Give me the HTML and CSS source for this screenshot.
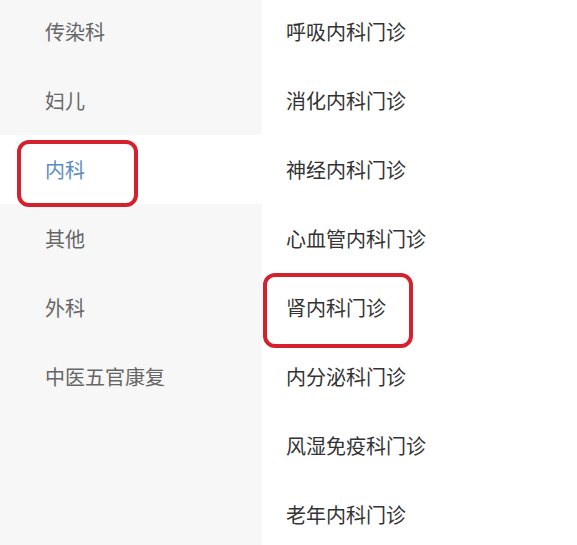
FILE: index.html
```html
<!DOCTYPE html>
<html lang="zh">
<head>
<meta charset="utf-8">
<link rel="stylesheet" href="styles.css">
</head>
<body>
<div class="page">
  <div class="side">
    <div class="side-item">传染科</div>
    <div class="side-item">妇儿</div>
    <div class="side-item active">内科</div>
    <div class="side-item">其他</div>
    <div class="side-item">外科</div>
    <div class="side-item">中医五官康复</div>
  </div>
  <div class="main">
    <div class="main-item">呼吸内科门诊</div>
    <div class="main-item">消化内科门诊</div>
    <div class="main-item">神经内科门诊</div>
    <div class="main-item">心血管内科门诊</div>
    <div class="main-item">肾内科门诊</div>
    <div class="main-item">内分泌科门诊</div>
    <div class="main-item">风湿免疫科门诊</div>
    <div class="main-item">老年内科门诊</div>
  </div>
  <div class="mark mark-side"></div>
  <div class="mark mark-main"></div>
</div>
</body>
</html>
```
FILE: styles.css
```css
html, body {
  margin: 0;
  padding: 0;
  background: #ffffff;
}
body {
  font-family: "Noto Sans CJK SC", "Noto Sans", sans-serif;
  font-size: 20px;
  overflow: hidden;
}
.page {
  position: relative;
  width: 577px;
  height: 545px;
  display: flex;
  overflow: hidden;
}
.side {
  width: 262px;
  flex: none;
  background: #f7f7f7;
  display: flex;
  flex-direction: column;
  margin-top: -3px;
}
.side-item {
  height: 69px;
  flex: none;
  display: flex;
  align-items: center;
  padding-left: 45px;
  color: #666666;
  line-height: 1;
}
.side-item.active {
  background: #ffffff;
  color: #5d8cbf;
}
.main {
  flex: 1;
  display: flex;
  flex-direction: column;
  margin-top: -3px;
}
.main-item {
  height: 69px;
  flex: none;
  display: flex;
  align-items: center;
  padding-left: 24px;
  color: #333333;
  line-height: 1;
}
.mark {
  position: absolute;
  border: 4px solid #d3212d;
  border-radius: 12px;
  box-sizing: border-box;
}
.mark-side {
  left: 17px;
  top: 140px;
  width: 121px;
  height: 67px;
}
.mark-main {
  left: 263px;
  top: 273px;
  width: 150px;
  height: 75px;
}
```
